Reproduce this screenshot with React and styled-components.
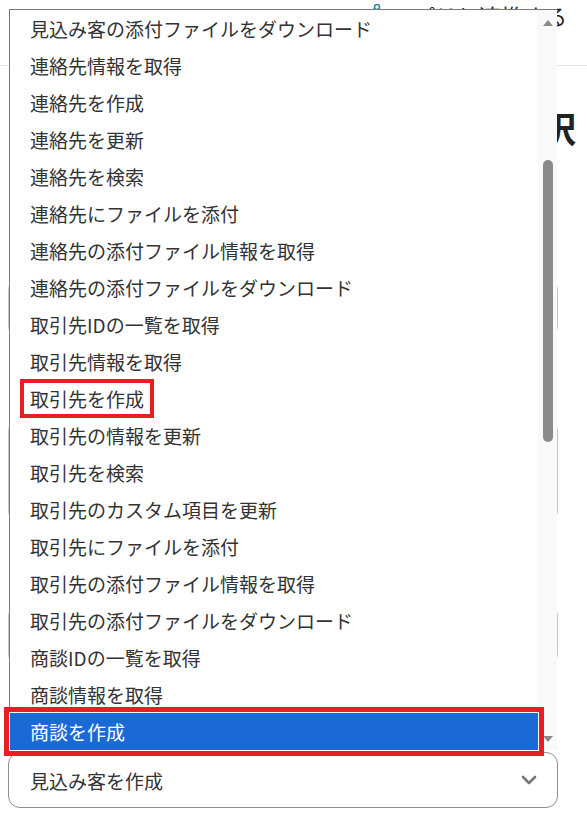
import styled, { createGlobalStyle } from 'styled-components';

const GlobalStyle = createGlobalStyle`
  body {
    margin: 0;
    background: #fff;
    font-family: "Noto Sans CJK JP", "Noto Sans", sans-serif;
    color: #333;
  }
`;

const Page = styled.div`
  position: relative;
  width: 587px;
  height: 816px;
  overflow: hidden;
  display: flex;
  flex-direction: column;
`;

const Header = styled.header`
  height: 66px;
  border-bottom: 1px solid #e4e4e4;
  display: flex;
  justify-content: flex-end;
  align-items: flex-start;
  gap: 8px;
  padding: 4px 20px 0 0;
  box-sizing: border-box;
  flex-shrink: 0;
`;

const HeaderLink = styled.span`
  font-size: 22px;
  line-height: 22px;
  color: #222;
`;

const Heading = styled.h1`
  margin: 39px 11px 0 0;
  font-size: 36px;
  line-height: 44px;
  font-weight: 700;
  color: #222;
  text-align: right;
`;

const Field = styled.div`
  margin: ${p => p.$gap}px 0 0 8px;
  width: 550px;
  height: ${p => p.$h}px;
  border: 1px solid ${p => (p.$strong ? '#8e8e8e' : '#c4c4c4')};
  border-radius: ${p => (p.$strong ? 12 : 10)}px;
  box-sizing: border-box;
  flex-shrink: 0;
  display: flex;
  align-items: center;
  justify-content: space-between;
  padding: 0 20px 0 21px;
  font-size: 19px;
  color: #333;
`;

const Popup = styled.div`
  position: absolute;
  top: 9px;
  left: 9px;
  width: 548px;
  height: 741px;
  box-sizing: border-box;
  border-top: 1px solid #7a7a7a;
  border-left: 1px solid #7a7a7a;
  background: #fff;
  display: flex;
`;

const List = styled.ul`
  list-style: none;
  margin: 0;
  padding: 0;
  flex: 1;
`;

const Item = styled.li`
  height: 37px;
  display: flex;
  align-items: center;
  padding-left: 20px;
  font-size: 19px;
  color: ${p => (p.$selected ? '#fff' : '#333')};
  background: ${p => (p.$selected ? '#1b69d5' : 'transparent')};
  white-space: nowrap;
  ${p =>
    p.$selected &&
    `
    position: relative;
    z-index: 1;
    box-shadow: 0 0 0 1px #fff, 0 0 0 6px #e81e25;
  `}
`;

const Label = styled.span`
  ${p =>
    p.$marked &&
    `
    line-height: 31px;
    padding: 0 6px;
    margin-left: -6px;
    outline: 4px solid #e81e25;
  `}
`;

const Track = styled.div`
  width: 19px;
  background: #f9f9f9;
  display: flex;
  flex-direction: column;
  align-items: center;
  padding: 10px 0 8px;
  box-sizing: border-box;
`;

const Arrow = styled.div`
  width: 0;
  height: 0;
  border-left: 5px solid transparent;
  border-right: 5px solid transparent;
  ${p => (p.$down ? 'border-top' : 'border-bottom')}: 6px solid #8a8a8a;
  margin-left: 1px;
`;

const Thumb = styled.div`
  width: 10px;
  height: 282px;
  border-radius: 5px;
  background: #8b8b8b;
  margin: 134px 0 0 1px;
`;

const Spacer = styled.div`
  flex: 1;
`;

const items = [
  '見込み客の添付ファイルをダウンロード',
  '連絡先情報を取得',
  '連絡先を作成',
  '連絡先を更新',
  '連絡先を検索',
  '連絡先にファイルを添付',
  '連絡先の添付ファイル情報を取得',
  '連絡先の添付ファイルをダウンロード',
  '取引先IDの一覧を取得',
  '取引先情報を取得',
  '取引先を作成',
  '取引先の情報を更新',
  '取引先を検索',
  '取引先のカスタム項目を更新',
  '取引先にファイルを添付',
  '取引先の添付ファイル情報を取得',
  '取引先の添付ファイルをダウンロード',
  '商談IDの一覧を取得',
  '商談情報を取得',
  '商談を作成',
];

const LinkIcon = () => (
  <svg width="20" height="22" viewBox="0 0 20 22" fill="none" stroke="#2a8ea0" strokeWidth="1.6">
    <circle cx="14" cy="3" r="2.5" />
    <circle cx="5" cy="9" r="2.5" />
    <circle cx="14" cy="16" r="2.5" />
    <path d="M7.2 7.8l4.6-3.4M7.2 10.4l4.6 4.2" />
  </svg>
);

const Chevron = () => (
  <svg width="16" height="10" viewBox="0 0 16 10" fill="none" stroke="#777" strokeWidth="2.6" strokeLinecap="round" strokeLinejoin="round">
    <path d="M2 2l6 6 6-6" />
  </svg>
);

const App = () => (
  <>
    <GlobalStyle />
    <Page>
      <Header>
        <LinkIcon />
        <HeaderLink>アプリと連携する</HeaderLink>
      </Header>
      <Heading>アクションを選択</Heading>
      <Field $gap={131} $h={56} />
      <Field $gap={85} $h={100} />
      <Field $gap={85} $h={58} />
      <Field $gap={88} $h={56} $strong>
        見込み客を作成
        <Chevron />
      </Field>

      <Popup>
        <List>
          {items.map((text, i) => (
            <Item key={text} $selected={i === items.length - 1}>
              <Label $marked={text === '取引先を作成'}>{text}</Label>
            </Item>
          ))}
        </List>
        <Track>
          <Arrow />
          <Thumb />
          <Spacer />
          <Arrow $down />
        </Track>
      </Popup>
    </Page>
  </>
);

export default App;
